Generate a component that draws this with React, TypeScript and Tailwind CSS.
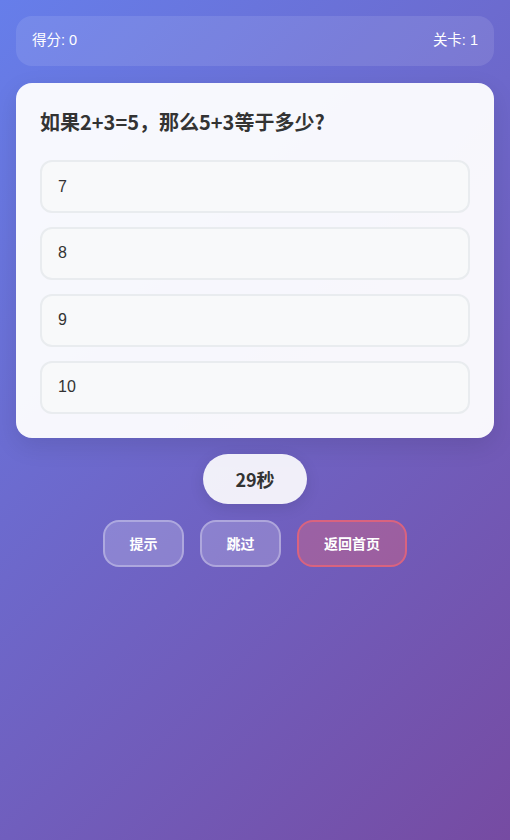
const options = ['7', '8', '9', '10'];

export default function App() {
  return (
    <div
      className="min-h-[840px] w-full bg-[linear-gradient(135deg,#667eea_0%,#764ba2_100%)] px-4 pt-4 text-white"
      style={{ fontFamily: '"Liberation Sans", "Noto Sans CJK SC", sans-serif' }}
    >
      <div className="flex h-[50px] items-center justify-between rounded-2xl bg-white/10 px-4 text-[14.5px]">
        <span>得分: 0</span>
        <span>关卡: 1</span>
      </div>

      <div className="mt-[17px] rounded-2xl bg-white/95 p-6 shadow-[0_8px_24px_rgba(0,0,0,0.1)]">
        <h2
          className="mb-[23px] text-[20px] font-bold leading-[30px] text-[#333]"
          style={{ fontFamily: '"Noto Sans CJK SC", sans-serif' }}
        >
          如果2+3=5，那么5+3等于多少?
        </h2>
        <div className="flex flex-col gap-[13.9px]">
          {options.map((o) => (
            <button
              key={o}
              className="flex h-[53px] items-center rounded-xl border-2 border-[#e9ecef] bg-[#f8f9fa] px-4 text-left text-base text-[#333]"
            >
              {o}
            </button>
          ))}
        </div>
      </div>

      <div className="mt-4 flex justify-center">
        <div
          className="flex h-[50px] w-[104px] items-center justify-center rounded-full bg-white/90 text-lg font-bold text-[#333] shadow-[0_4px_15px_rgba(0,0,0,0.1)]"
          style={{ fontFamily: '"Noto Sans CJK SC", sans-serif' }}
        >
          29秒
        </div>
      </div>

      <div
        className="mt-4 flex justify-center gap-4 text-sm font-bold"
        style={{ fontFamily: '"Noto Sans CJK SC", sans-serif' }}
      >
        <button className="h-[47px] w-[81px] rounded-2xl border-2 border-white/30 bg-white/20">提示</button>
        <button className="h-[47px] w-[81px] rounded-2xl border-2 border-white/30 bg-white/20">跳过</button>
        <button className="h-[47px] w-[110px] rounded-2xl border-2 border-[#d9637f] bg-[rgba(255,107,107,0.3)]">
          返回首页
        </button>
      </div>
    </div>
  );
}
